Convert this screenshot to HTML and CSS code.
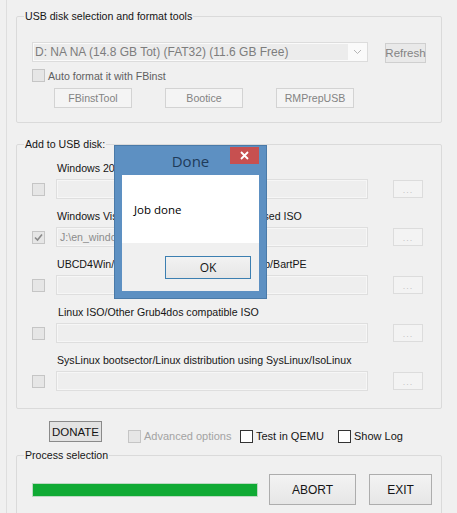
FILE: index.html
```html
<!DOCTYPE html>
<html>
<head>
<meta charset="utf-8">
<link rel="stylesheet" href="styles.css">
</head>
<body>
<div class="app">
  <fieldset class="group g1">
    <legend>USB disk selection and format tools</legend>
    <div class="combo-row">
      <div class="combo">
        <span class="combo-text">D: NA NA (14.8 GB Tot) (FAT32) (11.6 GB Free)</span>
        <span class="combo-arrow"><svg width="9" height="6" viewBox="0 0 9 6"><path d="M1 1 L4.5 4.5 L8 1" fill="none" stroke="#b5b5b5" stroke-width="1"/></svg></span>
      </div>
      <div class="btn btn-dis refresh">Refresh</div>
    </div>
    <div class="chk-row">
      <span class="cb cb-dis"></span>
      <span class="dis-label">Auto format it with FBinst</span>
    </div>
    <div class="tools">
      <div class="btn btn-dis tool">FBinstTool</div>
      <div class="btn btn-dis tool">Bootice</div>
      <div class="btn btn-dis tool">RMPrepUSB</div>
    </div>
  </fieldset>

  <fieldset class="group g2">
    <legend>Add to USB disk:</legend>
    <div class="g2-body">
      <div class="src">
        <div class="src-label">Windows 2000/XP/2003 Setup</div>
        <span class="cb cb-dis"></span>
        <div class="field"></div>
        <div class="dots">...</div>
      </div>
      <div class="src">
        <div class="src-label">Windows Vista / 7 / 8 / Server 2008/2012 based ISO</div>
        <span class="cb cb-dis cb-checked"><svg width="11" height="11" viewBox="0 0 11 11"><path d="M2 5.5 L4.5 8 L9 2.5" fill="none" stroke="#8a8a8a" stroke-width="1.6"/></svg></span>
        <div class="field"><span class="field-text">J:\en_windows_8_1_x64_dvd.iso</span></div>
        <div class="dots">...</div>
      </div>
      <div class="src">
        <div class="src-label">UBCD4Win/WinBuilder/Windows FLPC setup/BartPE</div>
        <span class="cb cb-dis"></span>
        <div class="field"></div>
        <div class="dots">...</div>
      </div>
      <div class="src">
        <div class="src-label src-label-2">Linux ISO/Other Grub4dos compatible ISO</div>
        <span class="cb cb-dis"></span>
        <div class="field"></div>
        <div class="dots">...</div>
      </div>
      <div class="src">
        <div class="src-label">SysLinux bootsector/Linux distribution using SysLinux/IsoLinux</div>
        <span class="cb cb-dis"></span>
        <div class="field"></div>
        <div class="dots">...</div>
      </div>
    </div>
  </fieldset>

  <div class="options">
    <div class="btn donate">DONATE</div>
    <div class="opt opt-adv"><span class="cb cb-dis"></span><span class="dis-label light">Advanced options</span></div>
    <div class="opt opt-qemu"><span class="cb cb-on"></span><span>Test in QEMU</span></div>
    <div class="opt opt-log"><span class="cb cb-on"></span><span>Show Log</span></div>
  </div>

  <fieldset class="group g3">
    <legend>Process selection</legend>
    <div class="process">
      <div class="progress"><div class="progress-fill"></div></div>
      <div class="btn big abort">ABORT</div>
      <div class="btn big exit">EXIT</div>
    </div>
  </fieldset>

  <div class="dialog">
    <div class="dlg-title">
      <span class="dlg-caption">Done</span>
      <span class="dlg-close"><svg width="9" height="9" viewBox="0 0 9 9"><path d="M1 1 L8 8 M8 1 L1 8" stroke="#fff" stroke-width="1.8"/></svg></span>
    </div>
    <div class="dlg-body">
      <div class="dlg-msg">Job done</div>
      <div class="dlg-foot">
        <div class="btn ok">OK</div>
      </div>
    </div>
  </div>
</div>
</body>
</html>
```

FILE: styles.css
```css
* { box-sizing: border-box; }
html, body { margin: 0; padding: 0; }
body {
  background: #f0f0f0;
  font-family: "Liberation Sans", Arial, sans-serif;
  font-size: 10.6px;
  color: #151515;
  overflow: hidden;
  height: 513px;
}
.app {
  position: relative;
  height: 513px;
  padding: 9px 0 0 9px;
  border-left: 1px solid #dedede;
  margin-left: 6px;
}
.group {
  margin: 0;
  padding: 0;
  width: 426px;
  border: 1px solid #dadada;
  border-radius: 2px;
  min-width: 0;
}
.group legend {
  margin-left: 7px;
  padding: 0 1px;
  line-height: 14px;
  height: 14px;
}

/* group 1 */
.combo-row {
  display: flex;
  align-items: flex-start;
  margin: 19px 0 0 15px;
}
.combo {
  width: 336px;
  height: 20px;
  border: 1px solid #dcdcdc;
  background: #fafafa;
  display: flex;
  padding: 1px;
}
.combo-text {
  flex: 1;
  background: #ececec;
  color: #7d7d7d;
  line-height: 16px;
  padding-left: 1px;
  font-size: 12px;
  white-space: nowrap;
}
.combo-arrow {
  width: 18px;
  display: flex;
  align-items: center;
  justify-content: center;
}
.btn {
  display: flex;
  align-items: center;
  justify-content: center;
  border: 1px solid #acacac;
  background: linear-gradient(#f2f2f2, #e5e5e5);
  white-space: nowrap;
}
.btn-dis {
  border-color: #d3d3d3;
  background: #f4f4f4;
  color: #838383;
}
.refresh {
  width: 41px;
  height: 20px;
  margin: 1px 0 0 17px;
  background: #e9e9e9;
  border-color: #cfcfcf;
  font-size: 11.5px;
}
.chk-row {
  display: flex;
  align-items: center;
  margin: 6px 0 0 15px;
  height: 13px;
  gap: 3px;
}
.cb {
  width: 13px;
  height: 13px;
  flex: none;
  border: 1px solid #333;
  background: #fff;
  display: flex;
  align-items: center;
  justify-content: center;
}
.cb-dis {
  border-color: #c5c5c5;
  background: #e6e6e6;
}
.dis-label { color: #5f5f5f; }
.dis-label.light { color: #a3a3a3; }
.tools {
  display: flex;
  gap: 33px;
  margin: 6px 0 14px 37px;
}
.tool {
  width: 78px;
  height: 20px;
}

/* group 2 */
.g2 { margin-top: 14px; }
.g2-body { padding: 10px 0 17px 15px; }
.src {
  display: grid;
  grid-template-columns: 24px 312px 25px 30px;
  grid-template-rows: 14px 20px;
  row-gap: 4px;
  margin-bottom: 10px;
}
.src:last-child { margin-bottom: 0; }
.src-label {
  grid-column: 2 / 5;
  grid-row: 1;
  line-height: 14px;
  padding-left: 1px;
  white-space: nowrap;
}
.src-label-2 { padding-left: 2px; }
.src .cb { grid-column: 1; grid-row: 2; align-self: center; }
.field {
  grid-column: 2;
  grid-row: 2;
  border: 1px solid #dedede;
  background: #eeeeee;
  box-shadow: inset 0 0 0 1px #f6f6f6;
  padding-left: 3px;
  line-height: 18px;
}
.field-text { color: #8c8c8c; }
.dots {
  grid-column: 4;
  grid-row: 2;
  height: 18px;
  align-self: center;
  border: 1px solid #dcdcdc;
  background: #f3f3f3;
  color: #c4c4c4;
  font-size: 9px;
  letter-spacing: 1px;
  text-align: center;
  line-height: 18px;
}

/* options */
.options {
  display: flex;
  align-items: flex-start;
  margin-top: 12px;
  padding-left: 33px;
  height: 21px;
}
.donate {
  width: 53px;
  height: 21px;
  border-color: #8a8a8a;
  background: #e3e3e3;
  font-size: 11.5px;
}
.opt {
  display: flex;
  align-items: center;
  gap: 3px;
  height: 14px;
  margin-top: 8px;
  white-space: nowrap;
  font-size: 11px;
}
.opt-adv { margin-left: 26px; width: 112px; }
.opt-qemu { width: 98px; }
.cb-on { border-color: #333; background: #fff; }

/* group 3 */
.g3 { margin-top: 6px; }
.process {
  display: flex;
  align-items: center;
  padding: 12px 0 20px 15px;
}
.progress {
  width: 226px;
  height: 14px;
  border: 1px solid #bcd9c2;
  background: #e6e6e6;
}
.progress-fill {
  height: 100%;
  width: 100%;
  background: #10aa34;
}
.big {
  height: 31px;
  font-size: 12px;
  border-color: #adadad;
  background: linear-gradient(#f3f3f3, #e6e6e6);
}
.abort { width: 87px; margin-left: 11px; }
.exit { width: 63px; margin-left: 13px; }

/* dialog */
.dialog {
  position: absolute;
  left: 107px;
  top: 145px;
  width: 153px;
  height: 154px;
  background: #5d90c2;
  border: 1px solid #4a7aa8;
  padding: 0 7px 7px 7px;
  display: flex;
  flex-direction: column;
  font-family: "Open Sans", "Noto Sans", sans-serif;
}
.dlg-title {
  position: relative;
  height: 29px;
  display: flex;
  align-items: center;
  justify-content: center;
}
.dlg-caption {
  font-size: 15px;
  color: #1f3b5a;
  margin-top: 1px;
}
.dlg-close {
  position: absolute;
  right: 0;
  top: 1px;
  width: 29px;
  height: 17px;
  background: #c75050;
  display: flex;
  align-items: center;
  justify-content: center;
}
.dlg-body {
  flex: 1;
  display: flex;
  flex-direction: column;
  background: #f0f0f0;
}
.dlg-msg {
  height: 68px;
  background: #fff;
  padding: 27px 0 0 12px;
  font-size: 11.5px;
  line-height: 16px;
  color: #000;
}
.dlg-foot {
  display: flex;
  justify-content: flex-end;
  padding: 13px 8px 0 0;
}
.ok {
  width: 86px;
  height: 23px;
  border-color: #3c7fb1;
  background: linear-gradient(#f2f2f2, #e6e6e6);
  font-size: 12px;
  font-family: "Open Sans", "Noto Sans", sans-serif;
}
```
